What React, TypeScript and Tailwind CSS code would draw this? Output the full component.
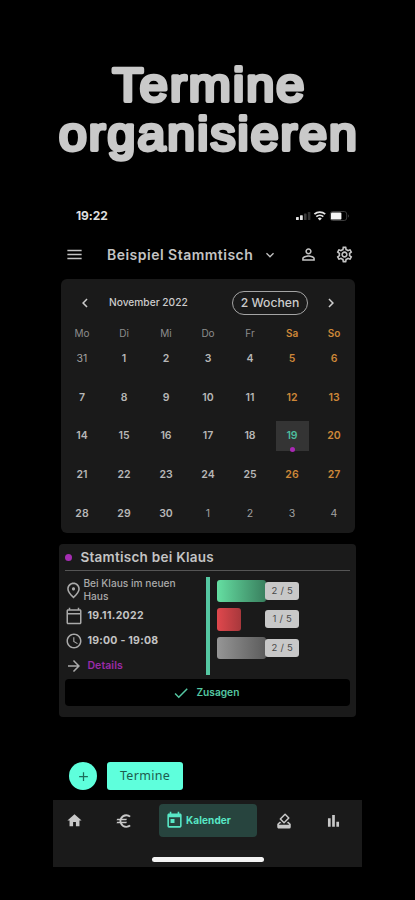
import { clsx } from 'clsx';
import type { ReactNode } from 'react';
import {
  MdAdd,
  MdArrowForward,
  MdCheck,
  MdChevronLeft,
  MdChevronRight,
  MdEuro,
  MdHome,
  MdHowToVote,
  MdKeyboardArrowDown,
  MdMenu,
  MdOutlineCalendarToday,
  MdOutlinePlace,
  MdOutlineSchedule,
  MdOutlineSettings,
  MdPersonOutline,
  MdToday,
} from 'react-icons/md';

const WEEKDAYS = ['Mo', 'Di', 'Mi', 'Do', 'Fr', 'Sa', 'So'];

const WEEKS = [
  [31, 1, 2, 3, 4, 5, 6],
  [7, 8, 9, 10, 11, 12, 13],
  [14, 15, 16, 17, 18, 19, 20],
  [21, 22, 23, 24, 25, 26, 27],
  [28, 29, 30, 1, 2, 3, 4],
];

const VOTES = [
  { label: '2 / 5', share: 2, color: 'from-[#65dfa2] to-[#397f5e]' },
  { label: '1 / 5', share: 1, color: 'from-[#e0484d] to-[#a8383c]' },
  { label: '2 / 5', share: 2, color: 'from-[#969696] to-[#5c5c5c]' },
];

// Rounded lettering: a round-joined stroke softens the corners of the glyphs
function Title() {
  return (
    <h1 className="h-[208px] pt-[50px]">
      <svg
        className="mx-auto font-['Liberation_Sans',sans-serif] text-[47px] tracking-[2px]"
        width="320"
        height="120"
        viewBox="0 0 320 120"
        fill="#c9c9c9"
        stroke="#c9c9c9"
        strokeWidth="3.9"
        strokeLinejoin="round"
        strokeLinecap="round"
        textRendering="geometricPrecision"
      >
        <text x="64.5" y="50.6" textLength="194" lengthAdjust="spacingAndGlyphs">Termine</text>
        <text x="11" y="100" textLength="300" lengthAdjust="spacingAndGlyphs">organisieren</text>
      </svg>
    </h1>
  );
}

function StatusBar() {
  return (
    <div className="flex h-4 items-center justify-between pl-[23px] pr-[11px]">
      <span className="text-xs font-bold tracking-[-0.1px] text-[#dedede]">19:22</span>
      <svg width="55" height="12" viewBox="0 0 55 12" fill="none">
        <rect x="0" y="7" width="2.8" height="3" rx="0.6" fill="#e4e4e4" />
        <rect x="4" y="5.2" width="2.8" height="4.8" rx="0.6" fill="#e4e4e4" />
        <rect x="8" y="3.5" width="2.6" height="6.5" rx="0.6" fill="#3c3c3c" />
        <rect x="11.8" y="2" width="2.6" height="8" rx="0.6" fill="#303030" />
        <path d="M18.4 4.2a8 8 0 0 1 10.8 0M20.3 6.7a5.2 5.2 0 0 1 7 0" stroke="#e4e4e4" strokeWidth="1.8" />
        <path d="m23.8 10.6-2-2.1a3 3 0 0 1 4 0z" fill="#e4e4e4" />
        <rect x="34.3" y="1.5" width="16.4" height="9" rx="2.5" stroke="#3c3c3c" />
        <rect x="35" y="2.4" width="10.4" height="7.2" rx="1.2" fill="#f4f4f4" />
        <path d="M52.2 4.6v3c.9-.3.9-2.7 0-3z" fill="#555" />
      </svg>
    </div>
  );
}

function Header() {
  return (
    <div className="mt-[14.5px] flex h-8 items-center text-[#c4c4c4]">
      <MdMenu className="ml-3 h-[19px] w-[19px]" />
      <h2 className="ml-[23px] w-[147px] whitespace-nowrap text-sm font-semibold tracking-[0.48px]">Beispiel Stammtisch</h2>
      <MdKeyboardArrowDown className="ml-2 h-4 w-4" />
      <MdPersonOutline className="ml-[21px] h-[19px] w-[19px]" />
      <MdOutlineSettings className="ml-[17px] h-[19px] w-[19px]" />
    </div>
  );
}

function Calendar() {
  return (
    <div className="ml-2 mt-[8.5px] h-[254px] w-[294px] rounded-md bg-[#1a1a1a]">
      <div className="flex h-[47px] items-center pl-[15px] text-[#cccccc]">
        <MdChevronLeft className="h-[18px] w-[18px]" />
        <span className="ml-[15px] w-[80px] whitespace-nowrap text-[10.2px] font-medium">November 2022</span>
        <button className="ml-[43px] h-6 w-[76px] rounded-full border border-[#a4a4a4] pt-px text-[12.2px] font-medium">
          2 Wochen
        </button>
        <MdChevronRight className="ml-[14px] h-[18px] w-[18px]" />
      </div>
      <div className="grid grid-cols-7 text-center text-[10px] text-[#8d8d8d]">
        {WEEKDAYS.map((day, idx) => (
          <span key={day} className={clsx('h-[14px] leading-[14px]', idx > 4 && 'font-semibold text-[#cd8738]')}>
            {day}
          </span>
        ))}
      </div>
      <div className="grid grid-cols-7">
        {WEEKS.map((week, row) =>
          week.map((day, col) => {
            const selected = row === 2 && day === 19;
            const outside = (row === 0 && day > 7) || (row === 4 && day < 7);
            return (
              <div key={`${row}-${col}`} className="flex h-[38.8px] items-start justify-center pt-[3px]">
                <span
                  className={clsx(
                    'relative flex h-[30px] w-[33px] items-center justify-center pt-[1.5px] text-[10.5px]',
                    outside ? 'text-[#a2a2a2]' : 'font-semibold',
                    !outside && col < 5 && 'text-[#b7b7b7]',
                    !outside && col > 4 && !selected && 'text-[#cd8738]',
                    selected && 'bg-[#343434] text-[#4dbd9d]'
                  )}
                >
                  {day}
                  {selected && <i className="absolute bottom-[-1px] left-[14px] h-[5px] w-[5px] rounded-full bg-[#a928b4]" />}
                </span>
              </div>
            );
          })
        )}
      </div>
    </div>
  );
}

function DetailRow({ icon, children }: { icon: ReactNode; children: ReactNode }) {
  return (
    <div className="flex h-[25.2px] items-center text-[#aaaaaa]">
      {icon}
      {children}
    </div>
  );
}

function EventCard() {
  return (
    <div className="ml-[6.4px] mt-[10.5px] h-[173.5px] w-[297px] rounded bg-[#1a1a1a] px-1.5">
      <div className="flex h-[27px] items-center border-b border-[#555] pt-[2px]">
        <i className="h-[7px] w-[7px] rounded-full bg-[#a52db2]" />
        <h3 className="ml-2 whitespace-nowrap text-[13.5px] font-semibold tracking-[0.26px] text-[#c4c4c4]">Stamtisch bei Klaus</h3>
      </div>
      <div className="flex h-[108px] pt-1.5">
        <div className="w-[140.6px] pt-[1.5px] text-[10px] font-semibold text-[#b8b8b8]">
          <DetailRow icon={<MdOutlinePlace className="-ml-px h-[19px] w-[19px] shrink-0" />}>
            <span className="w-[110px] -translate-y-px whitespace-nowrap text-[10.2px] font-medium leading-[12.5px]">
              Bei Klaus im neuen
              <br />
              Haus
            </span>
          </DetailRow>
          <DetailRow icon={<MdOutlineCalendarToday className="h-[18px] w-[18px]" />}>
            <span className="ml-1 text-[10.5px] font-bold tracking-[0.35px] text-[#c4c4c4]">19.11.2022</span>
          </DetailRow>
          <DetailRow icon={<MdOutlineSchedule className="h-[18px] w-[18px]" />}>
            <span className="ml-1 text-[10.5px] font-bold tracking-[0.25px] text-[#c4c4c4]">19:00 - 19:08</span>
          </DetailRow>
          <DetailRow icon={<MdArrowForward className="h-[18px] w-[18px]" />}>
            <span className="ml-1 text-[10.5px] tracking-[0.1px] text-[#9a2aa8]">Details</span>
          </DetailRow>
        </div>
        <div className="h-[98px] w-1 bg-[#55c7a2]" />
        <div className="ml-[7px] flex flex-col gap-[6px] pt-[3px]">
          {VOTES.map((vote, idx) => (
            <div key={idx} className="flex h-[22.6px] items-center">
              <div className="h-full w-12">
                <div
                  className={clsx('h-full rounded-[3px] bg-linear-to-r', vote.color)}
                  style={{ width: vote.share * 24.5 }}
                />
              </div>
              <span className="flex h-[18px] w-[34.5px] items-center justify-center rounded-[3px] bg-[#c8c8c8] text-[9.5px] tracking-[0.2px] text-[#494949]">
                {vote.label}
              </span>
            </div>
          ))}
        </div>
      </div>
      <button className="flex h-[27px] w-full items-center justify-center rounded bg-black pr-1 pt-px text-[10.2px] font-semibold text-[#55c7a2]">
        <MdCheck className="mr-[6px] h-[18px] w-[18px]" />
        Zusagen
      </button>
    </div>
  );
}

function BottomNav() {
  return (
    <nav className="mt-[10px] h-[67px] bg-[#1a1a1a]">
      <div className="flex h-[41px] items-center text-[#c8c8c8]">
        <MdHome className="ml-[13px] h-[17px] w-[17px]" />
        <MdEuro className="ml-[32px] h-[18px] w-[18px]" />
        <div className="ml-[26px] flex h-[33px] w-[98px] items-center rounded bg-[#27443e] pl-[6px] text-[10px] font-bold tracking-[0.1px] text-[#58e8c6]">
          <MdToday className="mr-[2px] h-[19px] w-[19px]" />
          Kalender
        </div>
        <MdHowToVote className="ml-[18px] h-[18px] w-[18px]" />
        <svg className="ml-[31px] h-[19px] w-[19px]" viewBox="0 0 24 24" fill="currentColor">
          <path d="M5 9.2h3.4V20H5zM10.3 5h3.4v15h-3.4zM15.6 13.6H19V20h-3.4z" />
        </svg>
      </div>
      <div className="ml-[99px] mt-4 h-[5px] w-28 rounded-full bg-[#f4f4f4]" />
    </nav>
  );
}

export default function App() {
  return (
    <div className="h-[900px] w-[415px] overflow-hidden bg-black font-['Inter','Roboto',sans-serif]">
      <Title />
      <div className="ml-[53px] w-[309px]">
        <StatusBar />
        <Header />
        <Calendar />
        <EventCard />
        <div className="mt-[45px] flex items-center pl-4">
          <button className="flex h-7 w-7 items-center justify-center rounded-full bg-[#5effdc] text-[#1d6d5c]">
            <MdAdd className="h-[15px] w-[15px]" />
          </button>
          <button className="ml-[10px] h-7 w-[76px] rounded-[3px] bg-[#5effdc] font-['Noto_Sans',sans-serif] text-[12.5px] tracking-[0.3px] text-[#1e5b4e]">
            Termine
          </button>
        </div>
        <BottomNav />
      </div>
    </div>
  );
}
